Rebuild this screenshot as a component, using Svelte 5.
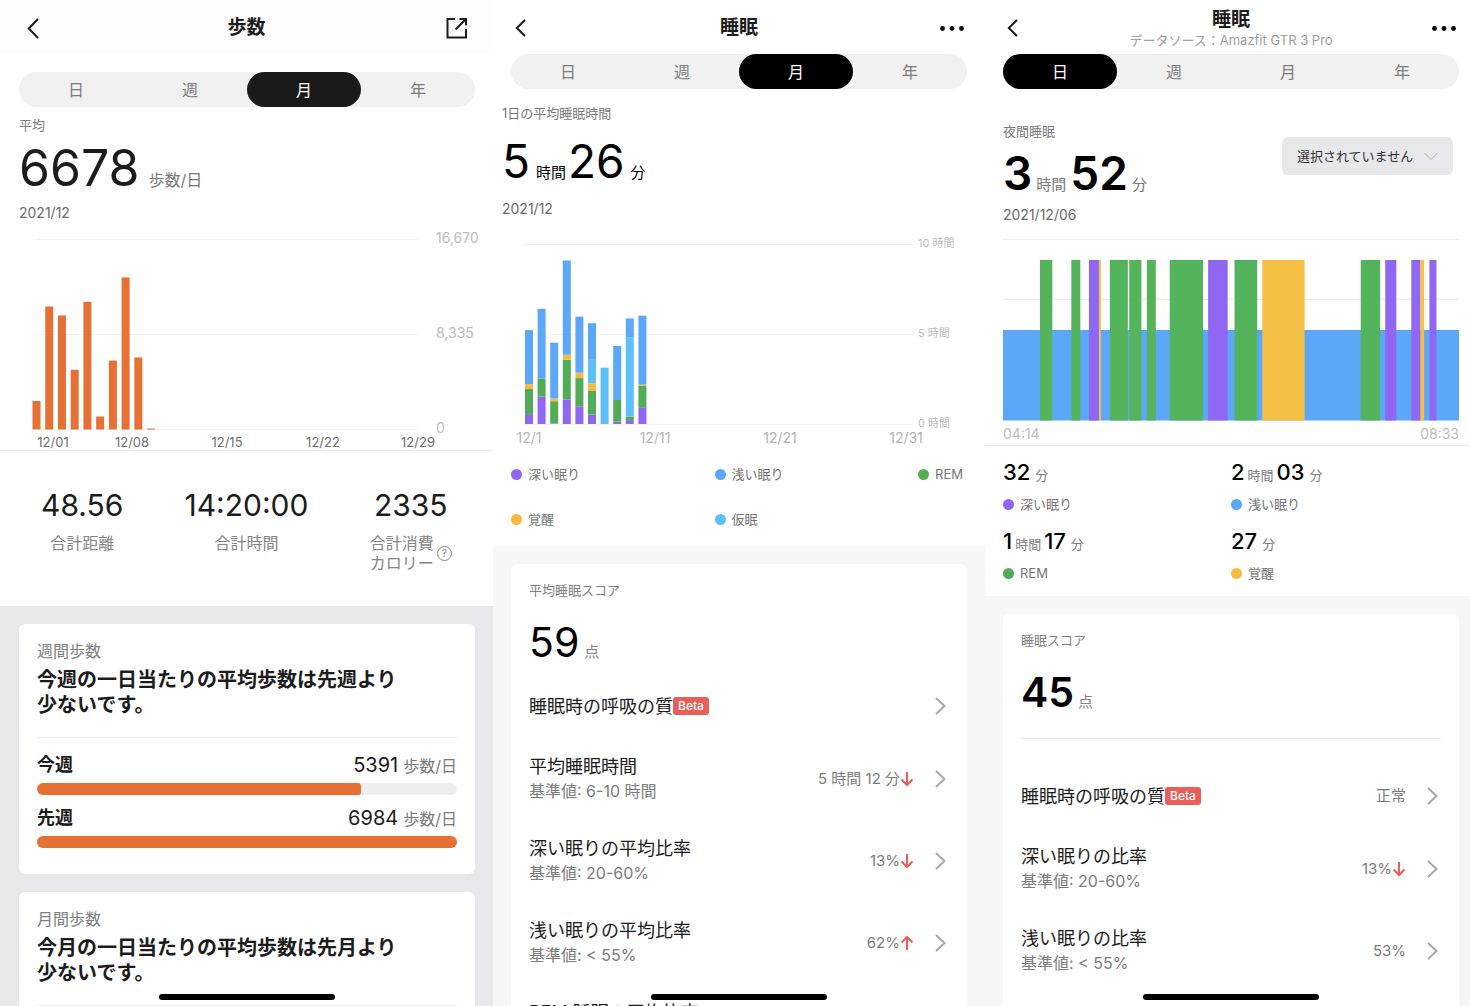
<script lang="ts">
  type Stage = 'deep' | 'light' | 'rem' | 'awake' | 'nap';
  type Row = { title: string; base?: string; value?: string; trend?: 'up' | 'down'; beta?: boolean };

  const periods = ['日', '週', '月', '年'];
  let stepsPeriod = $state('月');
  let monthPeriod = $state('月');
  let dayPeriod = $state('日');

  const stageNames: Record<Stage, string> = {
    deep: '深い眠り',
    light: '浅い眠り',
    rem: 'REM',
    awake: '覚醒',
    nap: '仮眠',
  };
  const monthLegend: Stage[] = ['deep', 'light', 'rem', 'awake', 'nap'];

  // steps per day, starting 11/30
  const steps = [2500, 10790, 10010, 5240, 11200, 1140, 6050, 13340, 6320, 90];
  const stepsMax = 16670;
  const stepDates = [
    { text: '12/01', x: 53 },
    { text: '12/08', x: 132 },
    { text: '12/15', x: 227 },
    { text: '12/22', x: 323 },
    { text: '12/29', x: 418 },
  ];

  // minutes per stage, bottom to top
  const nights: [Stage, number][][] = [
    [['deep', 33], ['rem', 84], ['awake', 16], ['light', 180]],
    [['deep', 91], ['rem', 60], ['light', 233]],
    [['deep', 2], ['rem', 74], ['awake', 9], ['light', 186]],
    [['deep', 82], ['rem', 132], ['awake', 17], ['light', 314]],
    [['deep', 59], ['rem', 94], ['awake', 18], ['light', 187]],
    [['deep', 31], ['rem', 79], ['awake', 26], ['nap', 78], ['light', 122]],
    [['nap', 188]],
    [['deep', 8], ['rem', 72], ['light', 180]],
    [['deep', 13], ['rem', 12], ['nap', 263], ['light', 64]],
    [['deep', 54], ['rem', 73], ['awake', 4], ['light', 230]],
  ];
  const nightDates = [
    { text: '12/1', x: 36 },
    { text: '12/11', x: 162 },
    { text: '12/21', x: 287 },
    { text: '12/31', x: 413 },
  ];

  const nightBars = nights.flatMap((night, i) => {
    let total = 0;
    return night.map(([stage, min]) => {
      total += min;
      return { stage, x: 32 + i * 12.6, y: 195 - total * 0.3, h: min * 0.3 };
    });
  });

  // minutes after 04:14, the night is 259 minutes long
  const nightLength = 259;
  const phases: { stage: Stage; from: number; to: number }[] = [
    { stage: 'rem', from: 21, to: 28 },
    { stage: 'rem', from: 38.8, to: 43.9 },
    { stage: 'deep', from: 48.8, to: 54.5 },
    { stage: 'awake', from: 54.5, to: 55.6 },
    { stage: 'rem', from: 60.7, to: 70.9 },
    { stage: 'rem', from: 71.7, to: 78.6 },
    { stage: 'rem', from: 81.7, to: 86.8 },
    { stage: 'rem', from: 94.7, to: 113.6 },
    { stage: 'deep', from: 116.5, to: 127.6 },
    { stage: 'rem', from: 131.5, to: 144.4 },
    { stage: 'awake', from: 147.3, to: 171.3 },
    { stage: 'rem', from: 203.2, to: 214.2 },
    { stage: 'deep', from: 217.1, to: 223.4 },
    { stage: 'deep', from: 231.9, to: 237.1 },
    { stage: 'awake', from: 237.1, to: 239.2 },
    { stage: 'deep', from: 242.2, to: 246.2 },
  ];

  const dayStats: { stage: Stage; h?: string; m: string }[] = [
    { stage: 'deep', m: '32' },
    { stage: 'light', h: '2', m: '03' },
    { stage: 'rem', h: '1', m: '17' },
    { stage: 'awake', m: '27' },
  ];

  const monthRows: Row[] = [
    { title: '睡眠時の呼吸の質', beta: true },
    { title: '平均睡眠時間', base: '6-10 時間', value: '5 時間 12 分', trend: 'down' },
    { title: '深い眠りの平均比率', base: '20-60%', value: '13%', trend: 'down' },
    { title: '浅い眠りの平均比率', base: '< 55%', value: '62%', trend: 'up' },
    { title: 'REM 睡眠の平均比率', base: '10-30%' },
  ];
  const dayRows: Row[] = [
    { title: '睡眠時の呼吸の質', beta: true, value: '正常' },
    { title: '深い眠りの比率', base: '20-60%', value: '13%', trend: 'down' },
    { title: '浅い眠りの比率', base: '< 55%', value: '53%' },
  ];

  const pct = (n: number, total: number) => `${(n / total) * 100}%`;
</script>

{#snippet more()}
  <button class="icon" aria-label="メニュー">
    <svg class="dots" width="24" height="5" viewBox="0 0 24 5">
      <circle cx="2.500" cy="2.500" r="2.400" /><circle cx="12" cy="2.500" r="2.400" /><circle cx="21.500" cy="2.500" r="2.400" />
    </svg>
  </button>
{/snippet}

{#snippet back()}
  <button class="icon back" aria-label="戻る">
    <svg width="11" height="18" viewBox="0 0 11 18"><path d="M10 1 1.800 9 10 17" /></svg>
  </button>
{/snippet}

{#snippet tabs(current: string, pick: (p: string) => void)}
  <div class="tabs">
    {#each periods as p}
      <button class:active={p === current} aria-pressed={p === current} onclick={() => pick(p)}>{p}</button>
    {/each}
  </div>
{/snippet}

{#snippet legend(stage: Stage)}
  <span class="legend"><i class="dot {stage}"></i>{stageNames[stage]}</span>
{/snippet}

{#snippet rows(list: Row[])}
  <ul class="rows">
    {#each list as row}
      <li>
        <button class="row" class:single={!row.base}>
          <span class="row-text">
            <span class="row-title">{row.title}{#if row.beta}<b class="beta">Beta</b>{/if}</span>
            {#if row.base}<span class="row-base">基準値: {row.base}</span>{/if}
          </span>
          <span class="row-value">
            {row.value ?? ''}
            {#if row.trend}
              <svg class="trend {row.trend}" width="14" height="16" viewBox="0 0 14 16">
                <path d="M7 1v13M1.500 8.500 7 14l5.500-5.500" />
              </svg>
            {/if}
          </span>
          <svg class="chevron" width="11" height="18" viewBox="0 0 11 18"><path d="M1 1l8.500 8L1 17" /></svg>
        </button>
      </li>
    {/each}
  </ul>
{/snippet}

{#snippet compare(name: string, value: number)}
  <div class="compare">
    <b>{name}</b>
    <span class="compare-value">{value}<small>歩数/日</small></span>
  </div>
  <div class="track"><div class="fill" style="width: {pct(value, 6984)}"></div></div>
{/snippet}

<main class="screens">
  <section class="screen steps">
    <header>
      <button class="icon" aria-label="戻る">
        <svg width="12" height="21" viewBox="0 0 12 21"><path d="M11 1 1.800 10.500 11 20" /></svg>
      </button>
      <div class="heading"><h1>歩数</h1></div>
      <button class="icon share" aria-label="共有">
        <svg width="22" height="22" viewBox="0 0 22 22">
          <path d="M9 2H1.500v18.500H20V12M9.500 12.500 20 2M13.500 2H20v6.500" />
        </svg>
      </button>
    </header>
    {@render tabs(stepsPeriod, (p) => (stepsPeriod = p))}
    <div class="summary">
      <p class="label">平均</p>
      <p class="big">6678<small>歩数/日</small></p>
      <p class="date">2021/12</p>
    </div>
    <svg class="chart" height="221" role="img" aria-label="歩数グラフ">
      {#each [10, 105, 200] as y}
        <line x1={pct(37, 493)} x2={pct(418, 493)} y1={y + 0.5} y2={y + 0.5} />
      {/each}
      {#each steps as n, i}
        {@const h = (n / stepsMax) * 190}
        <rect class="step" x={pct(32.5 + i * 12.73, 493)} width={pct(8, 493)} y={200.5 - h} height={h} />
      {/each}
      <text class="axis" x={pct(436, 493)} y="14">16,670</text>
      <text class="axis" x={pct(436, 493)} y="109">8,335</text>
      <text class="axis" x={pct(436, 493)} y="204">0</text>
      {#each stepDates as d}
        <text class="tick" x={pct(d.x, 493)} y="218">{d.text}</text>
      {/each}
    </svg>
    <div class="totals">
      <div><p class="total">48.56</p><p class="caption">合計距離</p></div>
      <div><p class="total">14:20:00</p><p class="caption">合計時間</p></div>
      <div>
        <p class="total">2335</p>
        <div class="calories">
          <p class="caption">合計消費<br />カロリー</p>
          <button class="help" aria-label="ヘルプ">?</button>
        </div>
      </div>
    </div>
    <div class="cards">
      <article class="card">
        <p class="card-label">週間歩数</p>
        <h2>今週の一日当たりの平均歩数は先週より<br />少ないです。</h2>
        <hr />
        {@render compare('今週', 5391)}
        {@render compare('先週', 6984)}
      </article>
      <article class="card">
        <p class="card-label">月間歩数</p>
        <h2>今月の一日当たりの平均歩数は先月より<br />少ないです。</h2>
        <hr />
      </article>
    </div>
    <div class="home"></div>
  </section>

  <section class="screen month">
    <header>
      {@render back()}
      <div class="heading"><h1>睡眠</h1></div>
      {@render more()}
    </header>
    {@render tabs(monthPeriod, (p) => (monthPeriod = p))}
    <div class="summary">
      <p class="label">1日の平均睡眠時間</p>
      <p class="big">5<small>時間</small>26<small>分</small></p>
      <p class="date">2021/12</p>
    </div>
    <svg class="chart" height="221" role="img" aria-label="月間睡眠グラフ">
      {#each [15, 105, 195] as y}
        <line x1={pct(30, 492)} x2={pct(420, 492)} y1={y + 0.5} y2={y + 0.5} />
      {/each}
      {#each nightBars as bar}
        <rect class={bar.stage} x={pct(bar.x, 492)} width={pct(8, 492)} y={bar.y} height={bar.h} />
      {/each}
      <text class="axis hours" x={pct(425, 492)} y="18">10 時間</text>
      <text class="axis hours" x={pct(425, 492)} y="108">5 時間</text>
      <text class="axis hours" x={pct(425, 492)} y="198">0 時間</text>
      {#each nightDates as d}
        <text class="tick pale" x={pct(d.x, 492)} y="214">{d.text}</text>
      {/each}
    </svg>
    <div class="stages">
      {#each monthLegend as stage}
        {@render legend(stage)}
      {/each}
    </div>
    <div class="cards">
      <article class="card">
        <p class="card-label">平均睡眠スコア</p>
        <p class="score">59<small>点</small></p>
        {@render rows(monthRows)}
      </article>
    </div>
    <div class="home"></div>
  </section>

  <section class="screen day">
    <header>
      {@render back()}
      <div class="heading">
        <h1>睡眠</h1>
        <p class="source">データソース：Amazfit GTR 3 Pro</p>
      </div>
      {@render more()}
    </header>
    {@render tabs(dayPeriod, (p) => (dayPeriod = p))}
    <div class="hero">
      <div class="summary">
        <p class="label">夜間睡眠</p>
        <p class="big">3<small>時間</small>52<small>分</small></p>
        <p class="date">2021/12/06</p>
      </div>
      <div class="picker">
        <select aria-label="睡眠の記録">
          <option>選択されていません</option>
        </select>
        <svg width="14" height="9" viewBox="0 0 14 9"><path d="M.5 1 7 7.500 13.500 1" /></svg>
      </div>
    </div>
    <div class="night">
      <svg class="chart" height="192" role="img" aria-label="夜間睡眠グラフ">
        <line x1="0" x2="100%" y1="10.5" y2="10.5" />
        <line x1="0" x2="100%" y1="70.5" y2="70.5" />
        <rect class="light" x="0" width="100%" y="101" height="90.5" />
        {#each phases as p}
          <rect
            class="phase {p.stage}"
            x={pct(p.from, nightLength)}
            width={pct(p.to - p.from, nightLength)}
            y="31"
            height="160.5"
          />
        {/each}
      </svg>
      <div class="range"><span>04:14</span><span>08:33</span></div>
    </div>
    <div class="day-stats">
      {#each dayStats as s}
        <div>
          <p class="amount">{#if s.h}{s.h}<small>時間</small>{/if}{s.m}<small class="min">分</small></p>
          {@render legend(s.stage)}
        </div>
      {/each}
    </div>
    <div class="cards">
      <article class="card">
        <p class="card-label">睡眠スコア</p>
        <p class="score">45<small>点</small></p>
        <hr />
        {@render rows(dayRows)}
      </article>
    </div>
    <div class="home"></div>
  </section>
</main>

<style>
  :global(body) {
    overflow: hidden;
    background: #fff;
  }
  .screens {
    display: grid;
    grid-template-columns: 493fr 492fr 492fr;
    /* the last screen runs a little past the window */
    width: calc(100% + 7px);
    height: 100vh;
    font-family: Inter, 'Noto Sans CJK JP', sans-serif;
    color: #1c1c1c;
  }
  .screen {
    position: relative;
    display: flex;
    flex-direction: column;
    min-width: 0;
    overflow: hidden;
    background: #fff;
  }
  p, h1, h2, ul {
    margin: 0;
    padding: 0;
    font-weight: 400;
  }
  small {
    font-weight: 400;
    line-height: 1;
  }
  button, select {
    margin: 0;
    padding: 0;
    border: 0;
    background: none;
    font: inherit;
    color: inherit;
    cursor: pointer;
  }
  hr {
    height: 1px;
    margin: 0;
    border: 0;
    background: #ececec;
  }

  header {
    display: grid;
    grid-template-columns: 66px 1fr 66px;
    align-items: center;
    flex: none;
    box-sizing: border-box;
    height: 54px;
    padding-top: 2px;
  }
  .steps header {
    background: #fdfdfd;
  }
  .heading {
    text-align: center;
    white-space: nowrap;
  }
  h1 {
    font-size: 19px;
    line-height: 24px;
    font-weight: 700;
  }
  .source {
    font-size: 13px;
    line-height: 16px;
    color: #a0a0a0;
  }
  .icon {
    display: flex;
    justify-content: center;
    align-items: center;
    height: 44px;
  }
  .icon svg {
    fill: none;
    stroke: #1c1c1c;
    stroke-width: 2;
  }
  .icon .dots {
    fill: #000;
    stroke: none;
  }
  .back {
    padding-right: 12px;
  }
  .share {
    padding-right: 6px;
  }

  .tabs {
    display: grid;
    grid-template-columns: repeat(4, 1fr);
    flex: none;
    height: 35px;
    margin: 0 18px;
    border-radius: 18px;
    background: #f1f1f1;
  }
  .steps .tabs {
    margin-top: 18px;
    margin-left: 19px;
  }
  .tabs button {
    border-radius: 18px;
    font-size: 16px;
    line-height: 24px;
    color: #7c7c7c;
  }
  .tabs .active {
    background: #000;
    color: #fff;
  }
  .steps .tabs .active {
    background: #1a1a1a;
  }

  .label {
    font-size: 13px;
    line-height: 20px;
    color: #7a7a7a;
  }
  .big {
    font-size: 46px;
    line-height: 48px;
    color: #000;
    white-space: nowrap;
  }
  .big small {
    font-size: 15px;
  }
  .date {
    font-size: 14px;
    line-height: 20px;
    color: #6c6c6c;
  }
  .steps .summary {
    padding: 8px 19px 6px;
  }
  .steps .big {
    margin: 9px 0 11px;
    font-size: 50px;
    color: #1c1c1c;
  }
  .steps .big small {
    margin-left: 9px;
    font-size: 16px;
    color: #7a7a7a;
  }
  .month .summary {
    padding: 14px 9px 10px;
  }
  .month .big {
    margin: 14px 0;
  }
  .month .big small {
    margin: 0 2px 0 6px;
  }

  .chart {
    display: block;
    flex: none;
    width: 100%;
    overflow: visible;
  }
  .chart line {
    stroke: #f3f3f3;
  }
  .step {
    fill: #e57134;
  }
  .deep { fill: #8f67f2; }
  .light { fill: #5ca7f8; }
  .rem { fill: #52ab57; }
  .awake { fill: #f5bb40; }
  .nap { fill: #5cc1fb; }
  .phase.rem { fill: #54b45c; }
  .phase.awake { fill: #f4c144; }
  .axis {
    font-size: 14px;
    fill: #bdbdbd;
  }
  .axis.hours {
    font-size: 11px;
  }
  .tick {
    font-size: 13px;
    fill: #6f6f6f;
    text-anchor: middle;
  }
  .tick.pale {
    font-size: 14px;
    fill: #b5b5b5;
  }

  .totals {
    display: grid;
    grid-template-columns: repeat(3, 1fr);
    padding: 36px 0 33px;
    border-top: 1px solid #ececec;
    text-align: center;
  }
  .total {
    margin-bottom: 10px;
    font-size: 30px;
    line-height: 36px;
  }
  .caption {
    font-size: 16px;
    line-height: 20px;
    color: #858585;
  }
  .calories {
    display: flex;
    justify-content: center;
    align-items: center;
    gap: 3px;
  }
  .help {
    box-sizing: border-box;
    width: 15px;
    height: 15px;
    border: 1px solid #858585;
    border-radius: 50%;
    font-size: 10px;
    line-height: 13px;
    color: #858585;
  }

  .cards {
    display: flex;
    flex-direction: column;
    gap: 18px;
    flex: 1 0 auto;
    padding: 18px;
    background: #f7f7f7;
  }
  .steps .cards {
    padding-left: 19px;
    background: #e7e8ec;
  }
  .card {
    padding: 16px 18px 26px;
    border-radius: 6px;
    background: #fff;
  }
  .card-label {
    font-size: 13px;
    line-height: 20px;
    color: #808080;
  }
  .steps .card-label {
    padding-top: 1px;
    font-size: 16px;
  }
  h2 {
    margin: 7px 0 19px;
    font-size: 20px;
    line-height: 25px;
    font-weight: 700;
    white-space: nowrap;
  }
  .steps hr {
    margin-bottom: 15px;
  }
  .compare {
    display: flex;
    justify-content: space-between;
    font-size: 18px;
    line-height: 24px;
  }
  .compare-value {
    font-size: 20px;
  }
  .compare small {
    margin-left: 5px;
    font-size: 16px;
    color: #7a7a7a;
  }
  .track {
    height: 12px;
    margin-top: 6px;
    border-radius: 6px;
    background: #eee;
    overflow: hidden;
  }
  .track + .compare {
    margin-top: 11px;
  }
  .fill {
    height: 100%;
    border-radius: 0 3px 3px 0;
    background: #e57134;
  }

  .stages {
    display: grid;
    grid-template-columns: 1fr 1fr auto;
    row-gap: 25px;
    padding: 14px 22px 17px 18px;
  }
  .legend {
    display: flex;
    align-items: center;
    gap: 6px;
    font-size: 13px;
    line-height: 20px;
    color: #757575;
  }
  .dot {
    width: 11px;
    height: 11px;
    border-radius: 50%;
  }
  .dot.deep { background: #8f67f2; }
  .dot.light { background: #5ca7f8; }
  .dot.rem { background: #52ab57; }
  .dot.awake { background: #f5bb40; }
  .dot.nap { background: #5cc1fb; }

  .score {
    margin: 18px 0 8px;
    font-size: 41px;
    line-height: 48px;
    color: #000;
  }
  .score small {
    margin-left: 5px;
    font-size: 15px;
    color: #858585;
  }
  .rows {
    list-style: none;
  }
  .row {
    display: flex;
    align-items: center;
    width: 100%;
    height: 82px;
    padding-right: 3px;
    text-align: left;
  }
  .row.single {
    height: 64px;
  }
  .row-text {
    display: flex;
    flex-direction: column;
    flex: 1;
    line-height: 25px;
  }
  .row-title {
    display: flex;
    align-items: center;
    font-size: 18px;
  }
  .beta {
    padding: 0 5px;
    border-radius: 3px;
    background: #eb5f5a;
    font-size: 12px;
    line-height: 18px;
    font-weight: 500;
    color: #fff;
  }
  .row-base {
    font-size: 16px;
    color: #7c7c7c;
  }
  .row-value {
    display: flex;
    align-items: center;
    margin-right: 21px;
    font-size: 15px;
    line-height: 24px;
    color: #7c7c7c;
  }
  .trend {
    fill: none;
    stroke: #eb5f5a;
    stroke-width: 2;
  }
  .trend.up {
    transform: rotate(180deg);
  }
  .chevron {
    fill: none;
    stroke: #a8a8a8;
    stroke-width: 2;
  }

  .hero {
    display: flex;
    justify-content: space-between;
    align-items: flex-start;
    padding: 32px 24px 4px 18px;
  }
  .day .big {
    margin: 8px 0;
    font-weight: 600;
  }
  .day .big small {
    margin: 0 4px;
    color: #7a7a7a;
  }
  .picker {
    position: relative;
    margin-top: 16px;
  }
  .picker select {
    appearance: none;
    height: 38px;
    padding: 0 38px 0 15px;
    border-radius: 6px;
    background: #e7e8ec;
    font-size: 13px;
    color: #333;
  }
  .picker svg {
    position: absolute;
    top: 15px;
    right: 15px;
    fill: none;
    stroke: #aaa;
    stroke-width: 1;
    pointer-events: none;
  }
  .night {
    padding: 0 18px;
    border-bottom: 1px solid #ececec;
  }
  .night .chart line {
    stroke: #ececec;
  }
  .range {
    display: flex;
    justify-content: space-between;
    padding: 3px 0 1px;
    font-size: 14px;
    line-height: 20px;
    color: #bdbdbd;
  }
  .day-stats {
    display: grid;
    grid-template-columns: 1fr 1fr;
    row-gap: 13px;
    padding: 12px 18px 13px;
  }
  .amount {
    margin-bottom: 8px;
    font-size: 22px;
    line-height: 28px;
    font-weight: 500;
    color: #000;
  }
  .amount small {
    margin: 0 3px;
    font-size: 13px;
    color: #808080;
  }
  .amount .min {
    margin-left: 5px;
  }
  .day .score {
    margin-bottom: 22px;
    font-weight: 600;
  }
  .day .score small {
    margin-left: 4px;
  }
  .day hr {
    margin-bottom: 25px;
  }

  .home {
    position: absolute;
    bottom: 6px;
    left: 50%;
    width: 176px;
    height: 6px;
    border-radius: 3px;
    background: #000;
    transform: translateX(-50%);
  }
</style>
